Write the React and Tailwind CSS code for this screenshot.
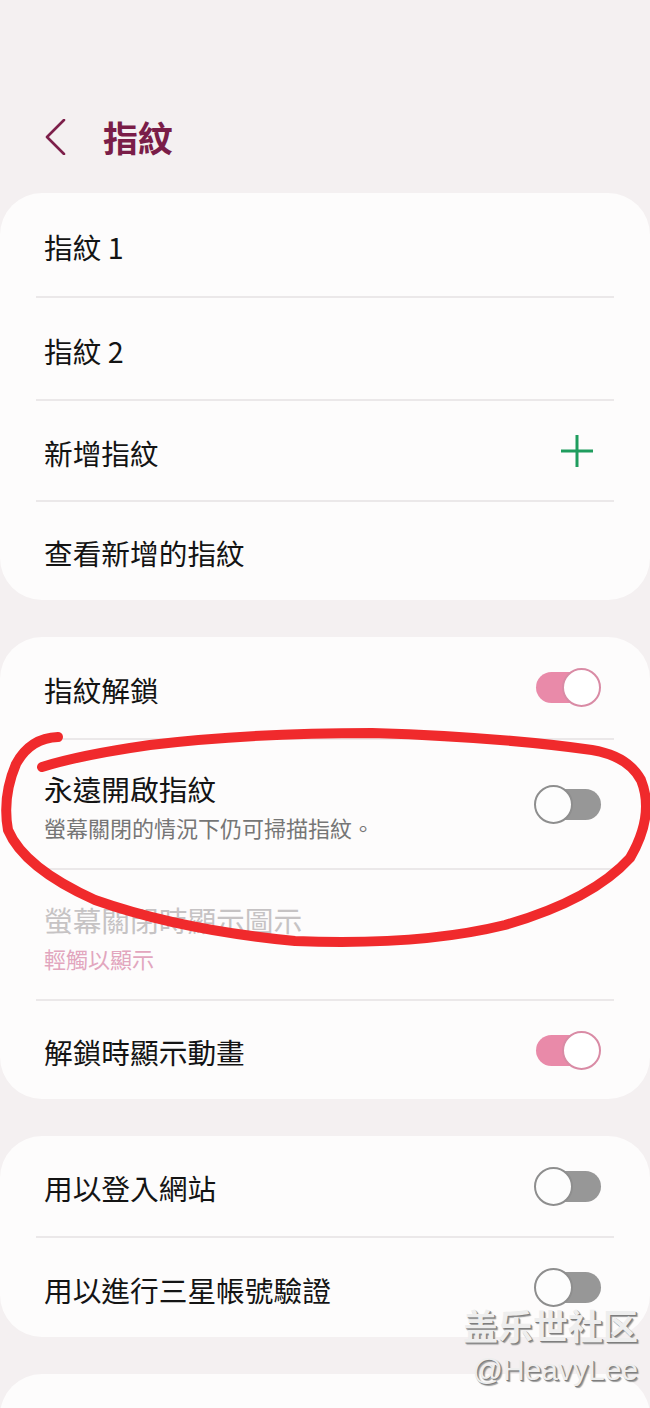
import React from "react";

const font = { fontFamily: '"Noto Sans CJK TC", "Noto Sans", sans-serif' };

function Toggle({ on }) {
  return (
    <div className="relative w-[67px] h-[39px] shrink-0">
      {on ? (
        <>
          <div className="absolute left-[2px] top-[4px] w-[62px] h-[31px] rounded-full bg-[#e98aa9]" />
          <div className="absolute right-0 top-0 w-[39px] h-[39px] rounded-full bg-white border-2 border-[#d98ba5]" />
        </>
      ) : (
        <>
          <div className="absolute right-0 top-[4px] w-[62px] h-[31px] rounded-full bg-[#979797]" />
          <div className="absolute left-0 top-0 w-[39px] h-[39px] rounded-full bg-[#fdfdfd] border-2 border-[#8e8e8e]" />
        </>
      )}
    </div>
  );
}

function Divider() {
  return <div className="mx-[36px] h-[2px] bg-[#ebe8e9]" />;
}

function Row({ h, title, sub, right, titleClass = "text-[#141414]", subClass = "text-[#767676]" }) {
  return (
    <div className={`mx-[36px] pl-[8px] pr-[13px] flex items-center justify-between ${h}`}>
      <div className="flex flex-col pt-[4px]">
        <div className={`text-[28.7px] leading-[36px] ${titleClass}`}>{title}</div>
        {sub && <div className={`text-[22px] leading-[28px] mt-[6px] ${subClass}`}>{sub}</div>}
      </div>
      {right}
    </div>
  );
}

function Plus() {
  return (
    <svg width="34" height="34" viewBox="0 0 34 34" className="mr-[7px]">
      <line x1="17" y1="1" x2="17" y2="33" stroke="#1f9d5e" strokeWidth="3" />
      <line x1="1" y1="17" x2="33" y2="17" stroke="#1f9d5e" strokeWidth="3" />
    </svg>
  );
}

export default function App() {
  return (
    <div className="relative w-[650px] h-[1408px] overflow-hidden bg-[#f4f0f1]" style={font}>
      {/* header */}
      <div className="h-[193px] flex items-start pt-[118px]">
        <svg width="30" height="36" viewBox="0 0 30 36" className="ml-[40px] mt-[1px]">
          <path d="M24 1 L7 18 L24 35" fill="none" stroke="#7d1f4a" strokeWidth="2.6" strokeLinecap="round" strokeLinejoin="round" />
        </svg>
        <div className="ml-[33px] text-[35px] leading-[38px] font-bold text-[#7a1d48]">指紋</div>
      </div>

      {/* card 1 */}
      <div className="bg-[#fdfcfc] rounded-[42px]">
        <Row h="h-[103px]" title="指紋 1" />
        <Divider />
        <Row h="h-[101px]" title="指紋 2" />
        <Divider />
        <Row h="h-[99px]" title="新增指紋" right={<Plus />} />
        <Divider />
        <Row h="h-[98px]" title="查看新增的指紋" />
      </div>

      <div className="h-[37px]" />

      {/* card 2 */}
      <div className="bg-[#fdfcfc] rounded-[42px]">
        <Row h="h-[101px]" title="指紋解鎖" right={<Toggle on />} />
        <Divider />
        <Row h="h-[128px]" title="永遠開啟指紋" sub="螢幕關閉的情況下仍可掃描指紋。" right={<Toggle on={false} />} />
        <Divider />
        <Row
          h="h-[129px]"
          title="螢幕關閉時顯示圖示"
          sub="輕觸以顯示"
          titleClass="text-[#c6c3c4]"
          subClass="text-[#e2a6be]"
        />
        <Divider />
        <Row h="h-[98px]" title="解鎖時顯示動畫" right={<Toggle on />} />
      </div>

      <div className="h-[37px]" />

      {/* card 3 */}
      <div className="bg-[#fdfcfc] rounded-[42px]">
        <Row h="h-[100px]" title="用以登入網站" right={<Toggle on={false} />} />
        <Divider />
        <Row h="h-[99px]" title="用以進行三星帳號驗證" right={<Toggle on={false} />} />
      </div>

      <div className="h-[37px]" />

      {/* card 4 */}
      <div className="bg-[#fdfcfc] rounded-[42px] h-[120px]" />

      {/* red annotation */}
      <svg
        className="absolute left-0 top-0 pointer-events-none"
        width="650"
        height="1408"
        viewBox="0 0 650 1408"
      >
        <path
          d="M58 737 Q30 738 16 764 Q2 797 8 830 Q24 868 95 900 Q180 930 295 941 Q420 946 505 925 Q592 900 630 858 Q655 815 641 780 Q628 756 592 750 Q500 737 372 733 Q250 733 150 745 Q80 755 42 767"
          fill="none"
          stroke="#f02a2c"
          strokeWidth="10"
          strokeLinecap="round"
          strokeLinejoin="round"
        />
      </svg>

      {/* watermark */}
      <div className="absolute right-[12px] top-[1304px] flex flex-col items-end pointer-events-none">
        <div className="text-[35px] leading-[42px] font-bold text-[#eeeeee] [text-shadow:1px_1px_0_#7e7e7e,2px_2px_1px_#9a9a9a]">
          盖乐世社区
        </div>
        <div
          className="text-[30px] leading-[36px] mt-[6px] text-[#eeeeee] [text-shadow:1px_1px_0_#7e7e7e,2px_2px_1px_#9a9a9a]"
          style={{ fontFamily: '"Liberation Sans", Arial, sans-serif' }}
        >
          @HeavyLee
        </div>
      </div>
    </div>
  );
}
